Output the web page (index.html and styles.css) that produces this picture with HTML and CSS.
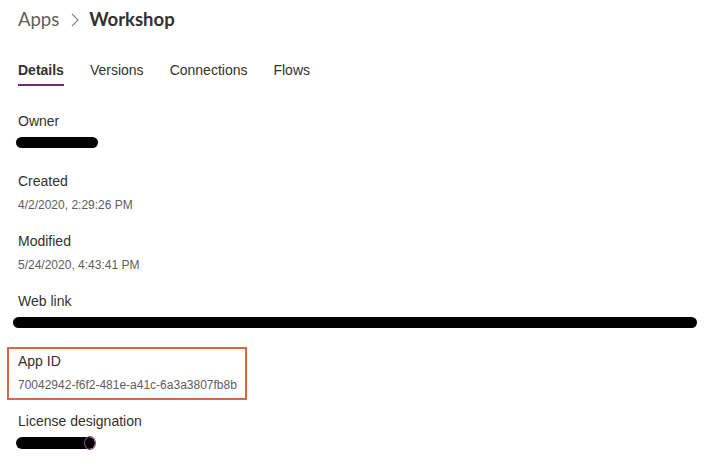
FILE: index.html
```html
<!DOCTYPE html>
<html>
<head>
<meta charset="utf-8">
<link rel="stylesheet" href="styles.css">
</head>
<body>
<div class="page">
  <div class="crumbs">
    <span class="crumb">Apps</span>
    <svg class="chev" width="8" height="14" viewBox="0 0 8 14"><polyline points="1,1 7,7 1,13" fill="none" stroke="#8a8886" stroke-width="1.2"/></svg>
    <span class="current">Workshop</span>
  </div>
  <div class="tabs">
    <span class="tab active">Details</span>
    <span class="tab">Versions</span>
    <span class="tab">Connections</span>
    <span class="tab">Flows</span>
  </div>
  <div class="fields">
    <div class="field">
      <div class="label">Owner</div>
      <div class="value"><span class="redact owner"></span></div>
    </div>
    <div class="field">
      <div class="label">Created</div>
      <div class="value">4/2/2020, 2:29:26 PM</div>
    </div>
    <div class="field">
      <div class="label">Modified</div>
      <div class="value">5/24/2020, 4:43:41 PM</div>
    </div>
    <div class="field">
      <div class="label">Web link</div>
      <div class="value"><span class="redact weblink"></span></div>
    </div>
    <div class="field highlight">
      <div class="label">App ID</div>
      <div class="value">70042942-f6f2-481e-a41c-6a3a3807fb8b</div>
    </div>
    <div class="field">
      <div class="label">License designation</div>
      <div class="value"><span class="redact license"><span class="ring"></span></span></div>
    </div>
  </div>
</div>
</body>
</html>
```

FILE: styles.css
```css
html, body {
  margin: 0;
  padding: 0;
  background: #ffffff;
}
body {
  font-family: "Liberation Sans", Arial, sans-serif;
  color: #323130;
}
.page {
  padding: 5px 0 0 18px;
}
.crumbs {
  display: flex;
  align-items: center;
  height: 28px;
  font-family: Lato, "Liberation Sans", sans-serif;
  font-size: 18.5px;
}
.crumb {
  color: #605e5c;
}
.chev {
  margin: 1px 10px 0 12px;
}
.current {
  font-weight: 700;
  color: #323130;
}
.tabs {
  display: flex;
  gap: 26px;
  margin-top: 27px;
  font-size: 14px;
}
.tab {
  line-height: 20px;
  padding: 0 0 4px;
  color: #323130;
}
.tab.active {
  font-weight: 700;
  border-bottom: 2px solid #742774;
}
.fields {
  margin-top: 25px;
}
.field {
  margin-bottom: 18px;
}
.label {
  font-size: 14px;
  line-height: 20px;
  color: #323130;
}
.value {
  margin-top: 6px;
  font-size: 12px;
  line-height: 16px;
  height: 16px;
  color: #605e5c;
  white-space: nowrap;
}
.highlight {
  width: 218px;
  margin: -4px 0 11px -11px;
  padding: 2px 9px 5px 9px;
  border: 2px solid #d7683f;
}
.redact {
  display: block;
  position: relative;
  height: 11px;
  margin-top: 4px;
  background: #000;
  border-radius: 6px;
}
.owner {
  width: 82px;
  margin-left: -2px;
}
.weblink {
  width: 684px;
  margin-left: -5px;
}
.license {
  width: 79px;
  margin-left: -2px;
  height: 12px;
  margin-top: 3px;
}
.ring {
  position: absolute;
  right: -1px;
  top: -1px;
  width: 10px;
  height: 12px;
  border: 1px solid #8a4b86;
  border-radius: 50%;
}
```
